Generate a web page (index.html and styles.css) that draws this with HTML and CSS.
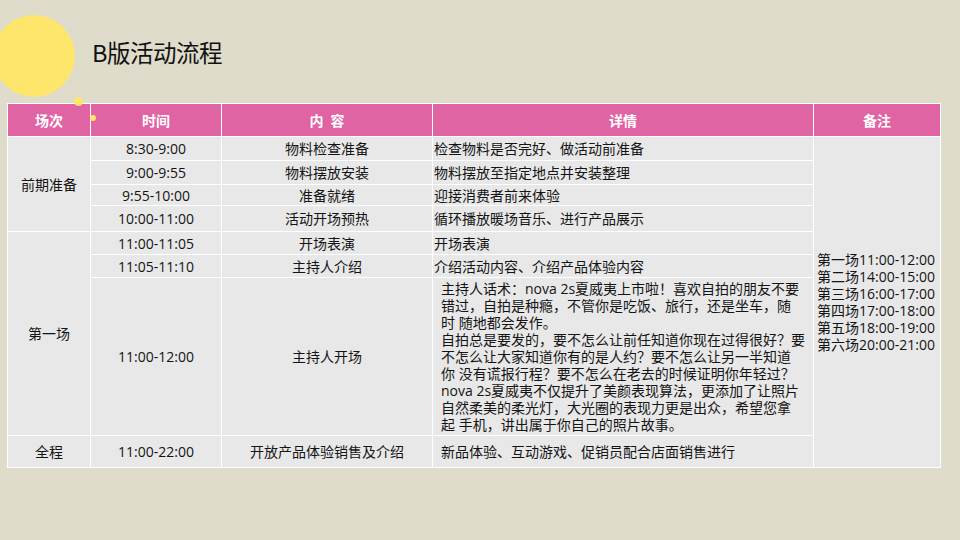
FILE: index.html
```html
<!DOCTYPE html>
<html lang="zh-CN">
<head>
<meta charset="utf-8">
<title>B版活动流程</title>
<link rel="stylesheet" href="styles.css">
</head>
<body>
<div class="slide">
  <div class="deco deco-big"></div>
  <div class="deco deco-dot1"></div>
  <div class="deco deco-dot2"></div>
  <header class="top">
    <h1 class="title">B版活动流程</h1>
  </header>
  <table class="plan">
    <colgroup>
      <col class="c1"><col class="c2"><col class="c3"><col class="c4"><col class="c5">
    </colgroup>
    <thead>
      <tr class="r-head">
        <th>场次</th><th>时间</th><th>内&ensp;容</th><th>详情</th><th>备注</th>
      </tr>
    </thead>
    <tbody>
      <tr class="r1">
        <td rowspan="4" class="center">前期准备</td>
        <td class="center">8:30-9:00</td>
        <td class="center">物料检查准备</td>
        <td class="detail">检查物料是否完好、做活动前准备</td>
        <td rowspan="8" class="note">第一场11:00-12:00<br>第二场14:00-15:00<br>第三场16:00-17:00<br>第四场17:00-18:00<br>第五场18:00-19:00<br>第六场20:00-21:00</td>
      </tr>
      <tr class="r2">
        <td class="center">9:00-9:55</td>
        <td class="center">物料摆放安装</td>
        <td class="detail">物料摆放至指定地点并安装整理</td>
      </tr>
      <tr class="r3">
        <td class="center">9:55-10:00</td>
        <td class="center">准备就绪</td>
        <td class="detail">迎接消费者前来体验</td>
      </tr>
      <tr class="r4">
        <td class="center">10:00-11:00</td>
        <td class="center">活动开场预热</td>
        <td class="detail">循环播放暖场音乐、进行产品展示</td>
      </tr>
      <tr class="r5">
        <td rowspan="3" class="center">第一场</td>
        <td class="center">11:00-11:05</td>
        <td class="center">开场表演</td>
        <td class="detail">开场表演</td>
      </tr>
      <tr class="r6">
        <td class="center">11:05-11:10</td>
        <td class="center">主持人介绍</td>
        <td class="detail">介绍活动内容、介绍产品体验内容</td>
      </tr>
      <tr class="r7">
        <td class="center">11:00-12:00</td>
        <td class="center">主持人开场</td>
        <td class="detail long">主持人话术：nova 2s夏威夷上市啦！喜欢自拍的朋友不要<br>错过，自拍是种瘾，不管你是吃饭、旅行，还是坐车，随<br>时 随地都会发作。<br>自拍总是要发的，要不怎么让前任知道你现在过得很好？要<br>不怎么让大家知道你有的是人约？要不怎么让另一半知道<br>你 没有谎报行程？要不怎么在老去的时候证明你年轻过？<br>nova 2s夏威夷不仅提升了美颜表现算法，更添加了让照片<br>自然柔美的柔光灯，大光圈的表现力更是出众，希望您拿<br>起 手机，讲出属于你自己的照片故事。</td>
      </tr>
      <tr class="r8">
        <td class="center">全程</td>
        <td class="center">11:00-22:00</td>
        <td class="center">开放产品体验销售及介绍</td>
        <td class="detail padded">新品体验、互动游戏、促销员配合店面销售进行</td>
      </tr>
    </tbody>
  </table>
</div>
</body>
</html>
```

FILE: styles.css
```css
html, body {
  margin: 0;
  padding: 0;
}
body {
  background: #dfdccb;
  font-family: "Open Sans", "Noto Sans CJK SC", sans-serif;
  color: #141414;
}
.slide {
  position: relative;
  width: 960px;
  height: 540px;
  overflow: hidden;
  background: #dfdccb;
}
.deco {
  position: absolute;
  border-radius: 50%;
  background: #fee66c;
  z-index: 2;
}
.deco-big {
  left: -7px;
  top: 15px;
  width: 82px;
  height: 82px;
  z-index: 0;
}
.deco-dot1 {
  left: 74px;
  top: 97px;
  width: 9px;
  height: 9px;
}
.deco-dot2 {
  left: 90px;
  top: 115px;
  width: 6px;
  height: 6px;
}
.top {
  position: relative;
  z-index: 1;
  height: 103px;
  padding-left: 92px;
  box-sizing: border-box;
  padding-top: 36px;
}
.title {
  margin: 0;
  font-family: "Noto Sans CJK SC", sans-serif;
  font-weight: 400;
  font-size: 23.5px;
  line-height: 32px;
  letter-spacing: -0.5px;
  color: #111;
}
.plan {
  position: relative;
  z-index: 1;
  margin-left: 7px;
  border-collapse: collapse;
  table-layout: fixed;
  width: 933px;
  font-size: 14px;
}
.c1 { width: 83px; }
.c2 { width: 131px; }
.c3 { width: 211px; }
.c4 { width: 381px; }
.c5 { width: 127px; }
.plan th, .plan td {
  border: 1px solid #ffffff;
  padding: 0;
  background: #e8e8e8;
  line-height: 17px;
  vertical-align: middle;
}
.plan th {
  background: #e064a3;
  color: #ffffff;
  font-family: "Noto Sans CJK SC", sans-serif;
  font-weight: 700;
  font-size: 14px;
  text-align: center;
}
.r-head { height: 33px; }
.r1 { height: 24px; }
.r2 { height: 24px; }
.r3 { height: 21px; }
.r4 { height: 26px; }
.r5 { height: 23px; }
.r6 { height: 23px; }
.r7 { height: 158px; }
.r8 { height: 32px; }
.center { text-align: center; }
.detail {
  text-align: left;
  padding-left: 1px !important;
  white-space: nowrap;
}
.detail.long,
.detail.padded {
  padding-left: 8px !important;
}
.note {
  text-align: left;
  padding-left: 3px !important;
  white-space: nowrap;
}
```
